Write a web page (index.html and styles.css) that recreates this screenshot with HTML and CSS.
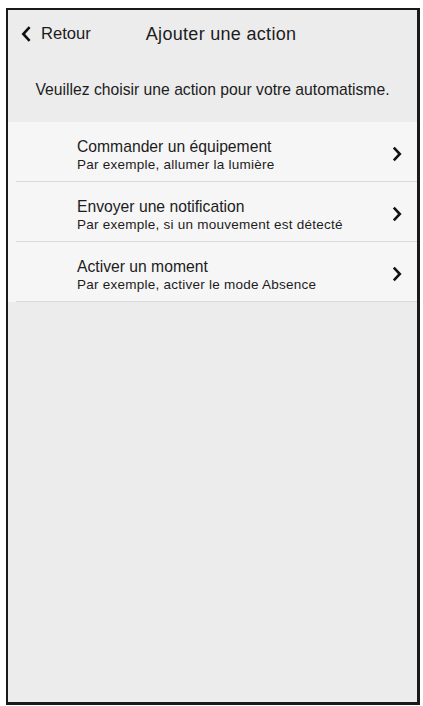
FILE: index.html
```html
<!DOCTYPE html>
<html lang="fr">
<head>
<meta charset="utf-8">
<title>Ajouter une action</title>
<link rel="stylesheet" href="styles.css">
</head>
<body>
<div class="frame">
  <header class="header">
    <a class="back" href="#">
      <svg class="back-icon" width="10" height="16" viewBox="0 0 10 16" aria-hidden="true">
        <polyline points="8.6,1.2 2.3,8 8.6,14.8" fill="none" stroke="#111" stroke-width="2.6" stroke-linejoin="miter" stroke-linecap="butt"/>
      </svg>
      <span class="back-label">Retour</span>
    </a>
    <h1 class="title">Ajouter une action</h1>
  </header>

  <p class="intro">Veuillez choisir une action pour votre automatisme.</p>

  <ul class="list">
    <li class="row">
      <div class="row-inner">
        <div class="row-text">
          <div class="row-title">Commander un équipement</div>
          <div class="row-sub">Par exemple, allumer la lumière</div>
        </div>
        <svg class="chev" width="10" height="16" viewBox="0 0 10 16" aria-hidden="true">
          <polyline points="1.8,1.6 7.8,8 1.8,14.4" fill="none" stroke="#111" stroke-width="2.6"/>
        </svg>
      </div>
    </li>
    <li class="row">
      <div class="row-inner">
        <div class="row-text">
          <div class="row-title">Envoyer une notification</div>
          <div class="row-sub">Par exemple, si un mouvement est détecté</div>
        </div>
        <svg class="chev" width="10" height="16" viewBox="0 0 10 16" aria-hidden="true">
          <polyline points="1.8,1.6 7.8,8 1.8,14.4" fill="none" stroke="#111" stroke-width="2.6"/>
        </svg>
      </div>
    </li>
    <li class="row">
      <div class="row-inner">
        <div class="row-text">
          <div class="row-title">Activer un moment</div>
          <div class="row-sub">Par exemple, activer le mode Absence</div>
        </div>
        <svg class="chev" width="10" height="16" viewBox="0 0 10 16" aria-hidden="true">
          <polyline points="1.8,1.6 7.8,8 1.8,14.4" fill="none" stroke="#111" stroke-width="2.6"/>
        </svg>
      </div>
    </li>
  </ul>
</div>
</body>
</html>
```

FILE: styles.css
```css
html, body {
  margin: 0;
  padding: 0;
  background: #ffffff;
}

body {
  font-family: "Liberation Sans", Arial, Helvetica, sans-serif;
  color: #1c1c1c;
}

.frame {
  box-sizing: border-box;
  margin: 8px 0 0 6px;
  width: 414px;
  height: 697px;
  border-style: solid;
  border-color: #1a1a1a;
  border-width: 2px 3px 3px 2px;
  background: #ececec;
  display: flex;
  flex-direction: column;
}

.header {
  display: flex;
  align-items: center;
  height: 20px;
  padding: 14px 0 0 13px;
}

.back {
  display: flex;
  align-items: center;
  gap: 10px;
  color: #1c1c1c;
  text-decoration: none;
}

.back-icon {
  display: block;
  margin-top: -1px;
}

.back-label {
  font-size: 16.6px;
  line-height: 20px;
}

.title {
  margin: 0 0 0 55px;
  font-size: 18px;
  letter-spacing: 0.3px;
  font-weight: normal;
  line-height: 20px;
}

.intro {
  margin: 36px 0 22px;
  text-align: center;
  font-size: 15.7px;
  line-height: 20px;
}

.list {
  list-style: none;
  margin: 0;
  padding: 0;
}

.row {
  background: #f6f6f6;
}

.row-inner {
  margin-left: 8px;
  box-sizing: border-box;
  height: 60px;
  padding: 15px 15px 7px 61px;
  border-bottom: 1px solid #dadada;
  display: flex;
  align-items: center;
  justify-content: space-between;
}

.row-text {
  display: flex;
  flex-direction: column;
}

.row-title {
  font-size: 15.7px;
  line-height: 19px;
}

.row-sub {
  font-size: 13.5px;
  letter-spacing: 0.25px;
  line-height: 18px;
}

.chev {
  display: block;
  flex: none;
  margin-top: -4px;
}
```
